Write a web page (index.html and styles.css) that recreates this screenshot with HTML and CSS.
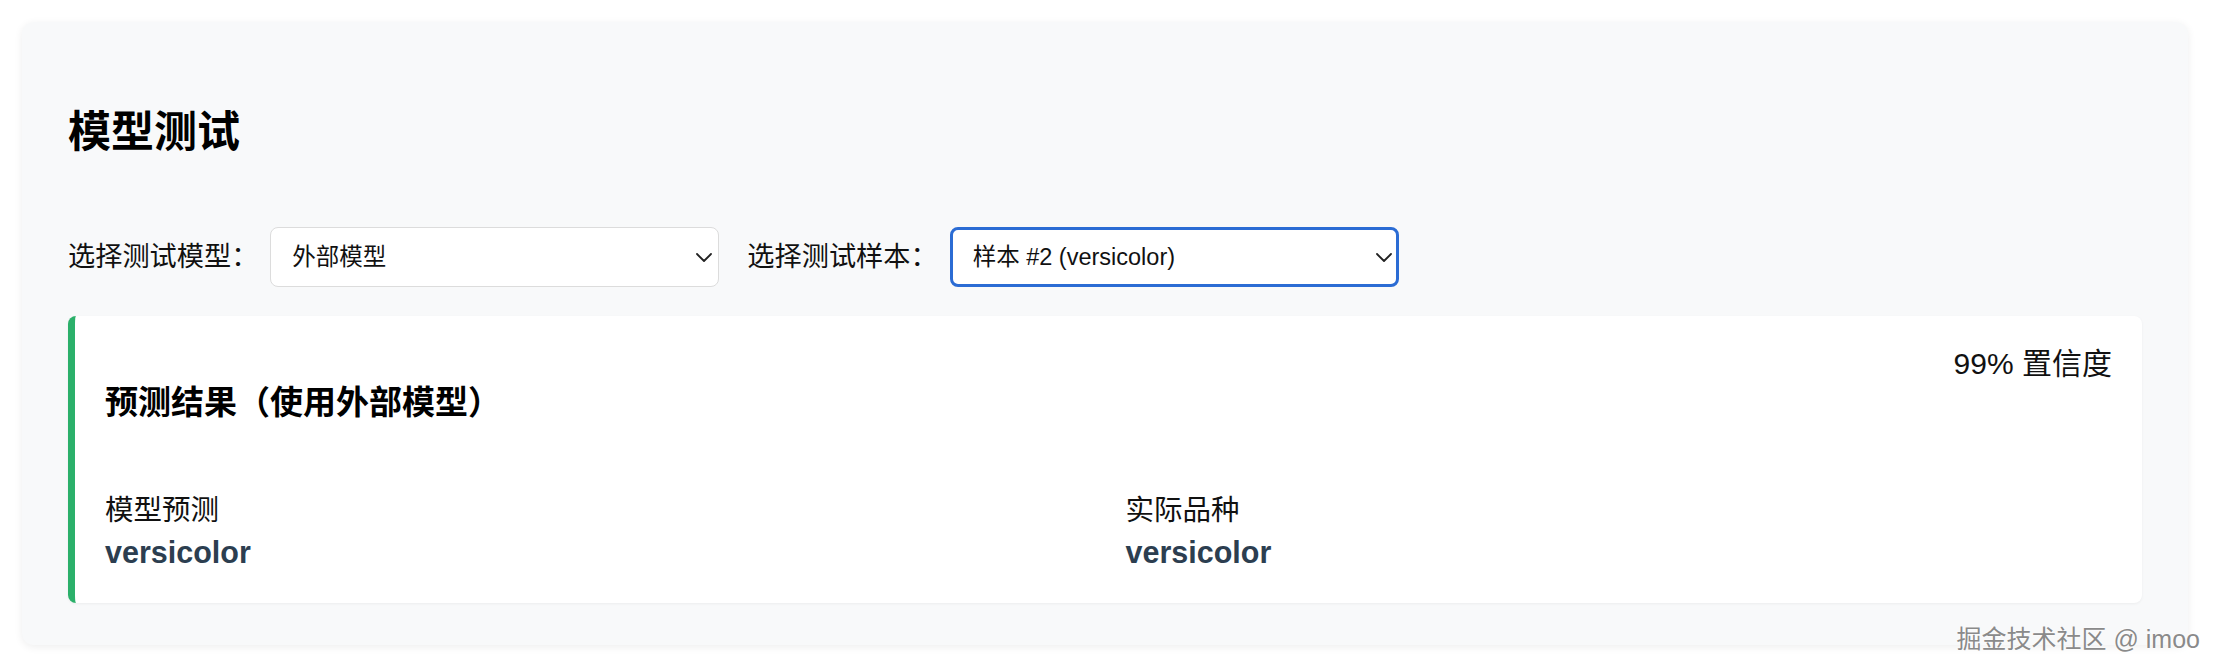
FILE: index.html
```html
<!DOCTYPE html>
<html lang="zh-CN">
<head>
<meta charset="utf-8">
<title>模型测试</title>
<link rel="stylesheet" href="styles.css">
</head>
<body>
<div class="panel">
  <h2 class="panel-title">模型测试</h2>
  <div class="controls">
    <div class="field">
      <label class="field-label" for="model">选择测试模型：</label>
      <div class="select-wrap">
        <select id="model" class="select">
          <option>外部模型</option>
        </select>
        <svg class="chevron" width="16" height="9" viewBox="0 0 16 9"><path d="M1 1 L8 8 L15 1" fill="none" stroke="#222" stroke-width="1.8" stroke-linecap="round" stroke-linejoin="round"/></svg>
      </div>
    </div>
    <div class="field">
      <label class="field-label" for="sample">选择测试样本：</label>
      <div class="select-wrap">
        <select id="sample" class="select select-focus">
          <option>样本 #2 (versicolor)</option>
        </select>
        <svg class="chevron" width="16" height="9" viewBox="0 0 16 9"><path d="M1 1 L8 8 L15 1" fill="none" stroke="#222" stroke-width="1.8" stroke-linecap="round" stroke-linejoin="round"/></svg>
      </div>
    </div>
  </div>
  <div class="result">
    <div class="result-head">
      <h3 class="result-title">预测结果（使用外部模型）</h3>
      <span class="confidence">99% 置信度</span>
    </div>
    <div class="result-grid">
      <div class="result-item">
        <div class="item-label">模型预测</div>
        <div class="item-value">versicolor</div>
      </div>
      <div class="result-item">
        <div class="item-label">实际品种</div>
        <div class="item-value">versicolor</div>
      </div>
    </div>
  </div>
</div>
<div class="watermark">掘金技术社区 @ imoo</div>
</body>
</html>
```

FILE: styles.css
```css
* { box-sizing: border-box; }

html, body {
  margin: 0;
  padding: 0;
  background: #ffffff;
}

body {
  font-family: "Liberation Sans", "Noto Sans CJK SC", sans-serif;
  color: #111;
  width: 2218px;
  height: 672px;
  overflow: hidden;
}

.panel {
  margin: 22px 30px 0 22px;
  padding: 34px 46px 42px;
  background: #f8f9fa;
  border-radius: 12px;
  box-shadow: 0 2px 8px rgba(0, 0, 0, 0.07);
}

.panel-title {
  margin: 52px 0 71px;
  font-size: 43px;
  line-height: 48px;
  font-weight: 700;
  color: #000;
}

.controls {
  display: flex;
  align-items: center;
  gap: 28px;
}

.field {
  display: flex;
  align-items: center;
  gap: 12px;
}

.field-label {
  font-size: 27.2px;
  line-height: 36px;
  color: #111;
}

.select-wrap {
  position: relative;
  width: 449px;
  height: 60px;
}

.select {
  appearance: none;
  -webkit-appearance: none;
  width: 100%;
  height: 100%;
  margin: 0;
  padding: 0 40px 0 21px;
  font-family: "Liberation Sans", "Noto Sans CJK SC", sans-serif;
  font-size: 23.5px;
  color: #111;
  background: #fff;
  border: 1px solid #dcdcdc;
  border-radius: 8px;
  outline: none;
}

.select-focus {
  border: 3px solid #2b6cd4;
  padding-left: 20px;
}

.chevron {
  position: absolute;
  right: 7px;
  top: 26px;
  pointer-events: none;
}

.result {
  margin-top: 29px;
  background: #fff;
  border-left: 7px solid #2bb06a;
  border-radius: 8px;
  padding: 28px 30px 31px 30px;
  box-shadow: 0 1px 3px rgba(0, 0, 0, 0.05);
}

.result-head {
  display: flex;
  justify-content: space-between;
  align-items: flex-start;
}

.result-title {
  margin: 39px 0 0;
  font-size: 33px;
  line-height: 40px;
  font-weight: 700;
  color: #000;
}

.confidence {
  font-size: 30px;
  line-height: 40px;
  color: #111;
}

.result-grid {
  display: grid;
  grid-template-columns: 1fr 1fr;
  column-gap: 34px;
  margin-top: 69px;
}

.item-label {
  font-size: 28.5px;
  line-height: 36px;
  color: #111;
}

.item-value {
  margin-top: 4px;
  font-size: 30.5px;
  line-height: 40px;
  font-weight: 700;
  color: #2c3e50;
}

.watermark {
  position: absolute;
  right: 18px;
  bottom: 18px;
  font-size: 25px;
  line-height: 30px;
  color: #8a8a8a;
  text-shadow: 0 0 2px #fff, 0 0 2px #fff;
}
```
